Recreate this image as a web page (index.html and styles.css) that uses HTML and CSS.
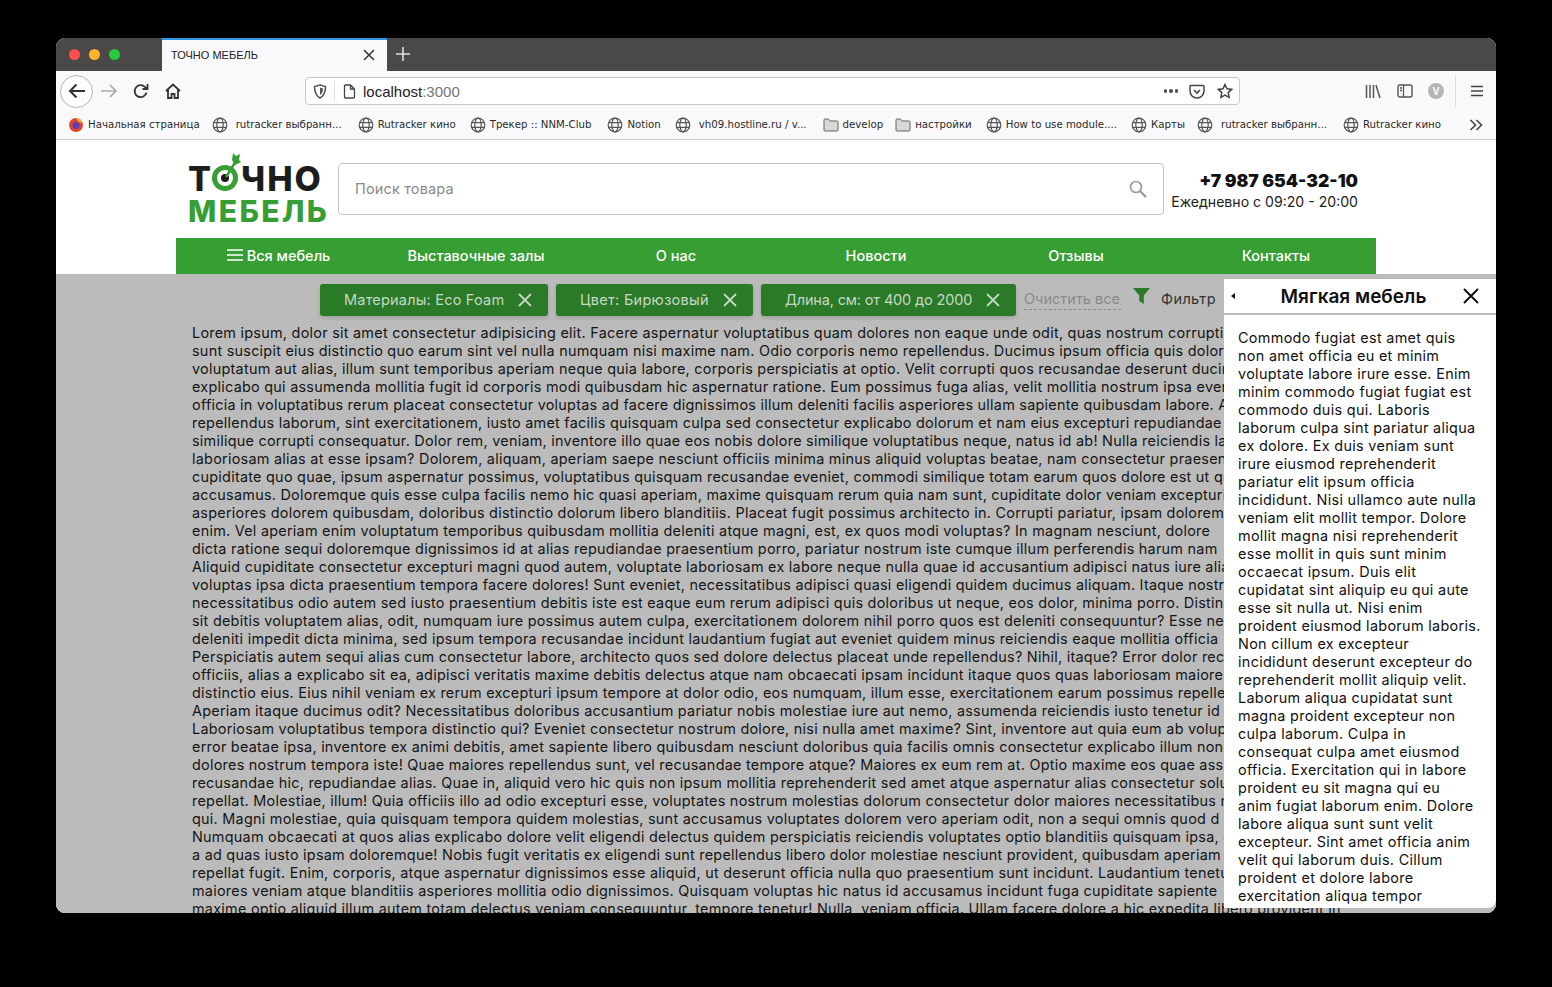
FILE: index.html
```html
<!DOCTYPE html>
<html lang="ru">
<head>
    <meta charset="UTF-8">
    <title>ТОЧНО МЕБЕЛЬ</title>
    <link rel="stylesheet" href="styles.css">
</head>
<body>
<div class="window">
    <!-- Вкладки -->
    <div class="tabbar">
        <div class="lights"><i class="red"></i><i class="yellow"></i><i class="green"></i></div>
        <div class="tab">
            <span class="tab-title">ТОЧНО МЕБЕЛЬ</span>
            <svg class="tab-close" width="12" height="12" viewBox="0 0 12 12"><path d="M1 1l10 10M11 1L1 11" stroke="#333" stroke-width="1.5"/></svg>
        </div>
        <svg class="tab-new" width="16" height="16" viewBox="0 0 16 16"><path d="M8 1v14M1 8h14" stroke="#ddd" stroke-width="1.6"/></svg>
    </div>

    <!-- Панель браузера -->
    <div class="toolbar">
        <div class="back"><svg width="20" height="18" viewBox="0 0 20 18"><path d="M18 9H3M9.500 2.500L3 9l6.500 6.500" fill="none" stroke="#333" stroke-width="2"/></svg></div>
        <svg class="tool-forward" width="18" height="16" viewBox="0 0 18 16"><path d="M1 8h15M10 2l6 6-6 6" fill="none" stroke="#aaa" stroke-width="1.700"/></svg>
        <svg class="tool-reload" width="16" height="16" viewBox="0 0 16 16"><path d="M13.500 9.500A6 6 0 1 1 12 4l2 2M14.500 1v5h-5" fill="none" stroke="#333" stroke-width="1.800"/></svg>
        <svg class="tool-home" width="16" height="16" viewBox="0 0 16 16"><path d="M1 8l7-6.500L15 8M3 6.500V15h3.500v-4h3v4H13V6.500" fill="none" stroke="#333" stroke-width="1.800"/></svg>
        <div class="urlbar">
            <svg class="url-shield" width="14" height="15" viewBox="0 0 14 15"><path d="M7 1l5.500 1.500c0 5-1 9-5.500 11.500C2.500 11.500 1.500 7.500 1.500 2.500z" fill="none" stroke="#555" stroke-width="1.500"/><path d="M7 3.500l3 1c0 3-.7 5-3 6.500z" fill="#555"/></svg>
            <span class="url-sep"></span>
            <svg class="url-page" width="13" height="15" viewBox="0 0 13 15"><path d="M2.500 1h5l4 4v8a1 1 0 0 1-1 1h-8a1 1 0 0 1-1-1V2a1 1 0 0 1 1-1zM7.500 1v4h4" fill="none" stroke="#444" stroke-width="1.300"/></svg>
            <span class="url-text">localhost<span class="url-port">:3000</span></span>
            <span class="url-dots"><i></i><i></i><i></i></span>
            <svg class="url-pocket" width="16" height="15" viewBox="0 0 16 15"><path d="M2 1.500h12a1 1 0 0 1 1 1V7a7 7 0 0 1-14 0V2.500a1 1 0 0 1 1-1z" fill="none" stroke="#444" stroke-width="1.500"/><path d="M5 6l3 3 3-3" fill="none" stroke="#444" stroke-width="1.600"/></svg>
            <svg class="url-star" width="16" height="16" viewBox="0 0 16 16"><path d="M8 1.500l2 4.300 4.700.6-3.500 3.200.9 4.700L8 12l-4.100 2.300.9-4.700L1.300 6.400 6 5.800z" fill="none" stroke="#444" stroke-width="1.500"/></svg>
        </div>
        <svg class="tool-lib" width="16" height="15" viewBox="0 0 16 15"><path d="M1.500 1v13M5 1v13M8.500 1v13M11 1l4 13" fill="none" stroke="#555" stroke-width="1.500"/></svg>
        <svg class="tool-side" width="16" height="14" viewBox="0 0 16 14"><rect x="1" y="1" width="14" height="12" rx="2" fill="none" stroke="#555" stroke-width="1.400"/><path d="M6.500 1v12M3 4h2M3 6.500h2" stroke="#555" stroke-width="1.300"/></svg>
        <span class="tool-avatar">V</span>
        <span class="tool-sep"></span>
        <svg class="tool-menu" width="12" height="12" viewBox="0 0 12 12"><path d="M0 1.500h12M0 6h12M0 10.500h12" stroke="#444" stroke-width="1.500"/></svg>
    </div>

    <!-- Закладки -->
    <div class="bookmarks">
        <span class="bm bm-first">
            <svg width="16" height="16" viewBox="0 0 16 16"><circle cx="8" cy="8" r="7" fill="#e0452b"/><circle cx="8" cy="8.500" r="3.500" fill="#5b3fb8"/><path d="M8 1a7 7 0 0 1 6.500 5L10 4.500z" fill="#fbb03b"/></svg>
            Начальная страница
        </span>
        <span class="bm bm-gap bm-wide"><svg class="globe" viewBox="0 0 16 16"><use href="#globe"/></svg>rutracker выбранн...</span>
        <span class="bm bm-mid"><svg class="globe" viewBox="0 0 16 16"><use href="#globe"/></svg>Rutracker кино</span>
        <span class="bm bm-wide"><svg class="globe" viewBox="0 0 16 16"><use href="#globe"/></svg>Трекер :: NNM-Club</span>
        <span class="bm bm-mid"><svg class="globe" viewBox="0 0 16 16"><use href="#globe"/></svg>Notion</span>
        <span class="bm bm-gap bm-wide"><svg class="globe" viewBox="0 0 16 16"><use href="#globe"/></svg>vh09.hostline.ru / v...</span>
        <span class="bm"><svg class="folder" viewBox="0 0 16 14"><use href="#folder"/></svg>develop</span>
        <span class="bm bm-mid"><svg class="folder" viewBox="0 0 16 14"><use href="#folder"/></svg>настройки</span>
        <span class="bm bm-mid"><svg class="globe" viewBox="0 0 16 16"><use href="#globe"/></svg>How to use module....</span>
        <span class="bm"><svg class="globe" viewBox="0 0 16 16"><use href="#globe"/></svg>Карты</span>
        <span class="bm bm-gap bm-wide"><svg class="globe" viewBox="0 0 16 16"><use href="#globe"/></svg>rutracker выбранн...</span>
        <span class="bm"><svg class="globe" viewBox="0 0 16 16"><use href="#globe"/></svg>Rutracker кино</span>
        <svg class="bm-more" width="14" height="12" viewBox="0 0 14 12"><path d="M1.500 1l5 5-5 5M7.500 1l5 5-5 5" fill="none" stroke="#444" stroke-width="1.600"/></svg>
    </div>

    <!-- Страница -->
    <div class="page">
        <header class="site-header">
            <div class="logo">
                <div class="logo-top">Т<svg class="logo-o" width="30" height="46" viewBox="0 0 30 46"><circle cx="13" cy="29" r="10.500" fill="none" stroke="#379e33" stroke-width="5"/><circle cx="13" cy="29" r="4" fill="#1d1d1b"/><path d="M14 28L24 12" stroke="#379e33" stroke-width="2.500"/><path d="M20 11l1-7 3 3 4-2-1 6 2 2-6 3z" fill="#379e33"/></svg>ЧНО</div>
                <div class="logo-bottom">МЕБЕЛЬ</div>
            </div>
            <div class="search">
                <span class="search-text">Поиск товара</span>
                <svg width="18" height="18" viewBox="0 0 18 18"><circle cx="7" cy="7" r="5.500" fill="none" stroke="#999" stroke-width="1.700"/><path d="M11 11l6 6" stroke="#999" stroke-width="2.200"/></svg>
            </div>
            <div class="contacts">
                <div class="phone">+7 987 654-32-10</div>
                <div class="hours">Ежедневно с 09:20 - 20:00</div>
            </div>
        </header>
        <nav class="nav">
            <a class="nav-all"><svg width="16" height="12" viewBox="0 0 16 12"><path d="M0 1h16M0 6h16M0 11h16" stroke="#fff" stroke-width="1.500"/></svg>Вся мебель</a>
            <a>Выставочные залы</a>
            <a>О нас</a>
            <a>Новости</a>
            <a>Отзывы</a>
            <a>Контакты</a>
        </nav>

        <div class="content">
            <div class="filters">
                <span class="chip chip-1">Материалы: Eco Foam<svg viewBox="0 0 14 14"><use href="#cross"/></svg></span>
                <span class="chip chip-2">Цвет: Бирюзовый<svg viewBox="0 0 14 14"><use href="#cross"/></svg></span>
                <span class="chip chip-3">Длина, см: от 400 до 2000<svg viewBox="0 0 14 14"><use href="#cross"/></svg></span>
                <span class="clear">Очистить все</span>
                <svg class="funnel" width="17" height="16" viewBox="0 0 17 16"><path d="M0 0h17l-6.200 7.500V16l-4.600-3V7.500z" fill="#2a7a27"/></svg>
                <span class="filter-label">Фильтр</span>
            </div>
            <div class="lorem">
                <p>Lorem ipsum, dolor sit amet consectetur adipisicing elit. Facere aspernatur voluptatibus quam dolores non eaque unde odit, quas nostrum corrupti</p>
                <p>sunt suscipit eius distinctio quo earum sint vel nulla numquam nisi maxime nam. Odio corporis nemo repellendus. Ducimus ipsum officia quis dolor</p>
                <p>voluptatum aut alias, illum sunt temporibus aperiam neque quia labore, corporis perspiciatis at optio. Velit corrupti quos recusandae deserunt ducimus</p>
                <p>explicabo qui assumenda mollitia fugit id corporis modi quibusdam hic aspernatur ratione. Eum possimus fuga alias, velit mollitia nostrum ipsa eveniet</p>
                <p>officia in voluptatibus rerum placeat consectetur voluptas ad facere dignissimos illum deleniti facilis asperiores ullam sapiente quibusdam labore. A</p>
                <p>repellendus laborum, sint exercitationem, iusto amet facilis quisquam culpa sed consectetur explicabo dolorum et nam eius excepturi repudiandae</p>
                <p>similique corrupti consequatur. Dolor rem, veniam, inventore illo quae eos nobis dolore similique voluptatibus neque, natus id ab! Nulla reiciendis la</p>
                <p>laboriosam alias at esse ipsam? Dolorem, aliquam, aperiam saepe nesciunt officiis minima minus aliquid voluptas beatae, nam consectetur praesentium</p>
                <p>cupiditate quo quae, ipsum aspernatur possimus, voluptatibus quisquam recusandae eveniet, commodi similique totam earum quos dolore est ut qui</p>
                <p>accusamus. Doloremque quis esse culpa facilis nemo hic quasi aperiam, maxime quisquam rerum quia nam sunt, cupiditate dolor veniam excepturi</p>
                <p>asperiores dolorem quibusdam, doloribus distinctio dolorum libero blanditiis. Placeat fugit possimus architecto in. Corrupti pariatur, ipsam dolorem</p>
                <p>enim. Vel aperiam enim voluptatum temporibus quibusdam mollitia deleniti atque magni, est, ex quos modi voluptas? In magnam nesciunt, dolore</p>
                <p>dicta ratione sequi doloremque dignissimos id at alias repudiandae praesentium porro, pariatur nostrum iste cumque illum perferendis harum nam</p>
                <p>Aliquid cupiditate consectetur excepturi magni quod autem, voluptate laboriosam ex labore neque nulla quae id accusantium adipisci natus iure alias</p>
                <p>voluptas ipsa dicta praesentium tempora facere dolores! Sunt eveniet, necessitatibus adipisci quasi eligendi quidem ducimus aliquam. Itaque nostrum</p>
                <p>necessitatibus odio autem sed iusto praesentium debitis iste est eaque eum rerum adipisci quis doloribus ut neque, eos dolor, minima porro. Distinctio</p>
                <p>sit debitis voluptatem alias, odit, numquam iure possimus autem culpa, exercitationem dolorem nihil porro quos est deleniti consequuntur? Esse ne</p>
                <p>deleniti impedit dicta minima, sed ipsum tempora recusandae incidunt laudantium fugiat aut eveniet quidem minus reiciendis eaque mollitia officia</p>
                <p>Perspiciatis autem sequi alias cum consectetur labore, architecto quos sed dolore delectus placeat unde repellendus? Nihil, itaque? Error dolor recusandae</p>
                <p>officiis, alias a explicabo sit ea, adipisci veritatis maxime debitis delectus atque nam obcaecati ipsam incidunt itaque quos quas laboriosam maiores</p>
                <p>distinctio eius. Eius nihil veniam ex rerum excepturi ipsum tempore at dolor odio, eos numquam, illum esse, exercitationem earum possimus repellendus</p>
                <p>Aperiam itaque ducimus odit? Necessitatibus doloribus accusantium pariatur nobis molestiae iure aut nemo, assumenda reiciendis iusto tenetur id</p>
                <p>Laboriosam voluptatibus tempora distinctio qui? Eveniet consectetur nostrum dolore, nisi nulla amet maxime? Sint, inventore aut quia eum ab volup</p>
                <p>error beatae ipsa, inventore ex animi debitis, amet sapiente libero quibusdam nesciunt doloribus quia facilis omnis consectetur explicabo illum non</p>
                <p>dolores nostrum tempora iste! Quae maiores repellendus sunt, vel recusandae tempore atque? Maiores ex eum rem at. Optio maxime eos quae assumenda</p>
                <p>recusandae hic, repudiandae alias. Quae in, aliquid vero hic quis non ipsum mollitia reprehenderit sed amet atque aspernatur alias consectetur solut</p>
                <p>repellat. Molestiae, illum! Quia officiis illo ad odio excepturi esse, voluptates nostrum molestias dolorum consectetur dolor maiores necessitatibus m</p>
                <p>qui. Magni molestiae, quia quisquam tempora quidem molestias, sunt accusamus voluptates dolorem vero aperiam odit, non a sequi omnis quod d</p>
                <p>Numquam obcaecati at quos alias explicabo dolore velit eligendi delectus quidem perspiciatis reiciendis voluptates optio blanditiis quisquam ipsa, quos</p>
                <p>a ad quas iusto ipsam doloremque! Nobis fugit veritatis ex eligendi sunt repellendus libero dolor molestiae nesciunt provident, quibusdam aperiam</p>
                <p>repellat fugit. Enim, corporis, atque aspernatur dignissimos esse aliquid, ut deserunt officia nulla quo praesentium sunt incidunt. Laudantium tenetur</p>
                <p>maiores veniam atque blanditiis asperiores mollitia odio dignissimos. Quisquam voluptas hic natus id accusamus incidunt fuga cupiditate sapiente</p>
                <p>maxime optio aliquid illum autem totam delectus veniam consequuntur, tempore tenetur! Nulla, veniam officia. Ullam facere dolore a hic expedita libero provident in</p>
            </div>

            <!-- Боковая панель -->
            <aside class="panel">
                <div class="panel-head">
                    <span class="panel-arrow"></span>
                    <span class="panel-title">Мягкая мебель</span>
                    <svg width="16" height="16" viewBox="0 0 16 16"><path d="M1 1l14 14M15 1L1 15" stroke="#111" stroke-width="2"/></svg>
                </div>
                <div class="panel-body">
                    <p>Commodo fugiat est amet quis</p>
                    <p>non amet officia eu et minim</p>
                    <p>voluptate labore irure esse. Enim</p>
                    <p>minim commodo fugiat fugiat est</p>
                    <p>commodo duis qui. Laboris</p>
                    <p>laborum culpa sint pariatur aliqua</p>
                    <p>ex dolore. Ex duis veniam sunt</p>
                    <p>irure eiusmod reprehenderit</p>
                    <p>pariatur elit ipsum officia</p>
                    <p>incididunt. Nisi ullamco aute nulla</p>
                    <p>veniam elit mollit tempor. Dolore</p>
                    <p>mollit magna nisi reprehenderit</p>
                    <p>esse mollit in quis sunt minim</p>
                    <p>occaecat ipsum. Duis elit</p>
                    <p>cupidatat sint aliquip eu qui aute</p>
                    <p>esse sit nulla ut. Nisi enim</p>
                    <p>proident eiusmod laborum laboris.</p>
                    <p>Non cillum ex excepteur</p>
                    <p>incididunt deserunt excepteur do</p>
                    <p>reprehenderit mollit aliquip velit.</p>
                    <p>Laborum aliqua cupidatat sunt</p>
                    <p>magna proident excepteur non</p>
                    <p>culpa laborum. Culpa in</p>
                    <p>consequat culpa amet eiusmod</p>
                    <p>officia. Exercitation qui in labore</p>
                    <p>proident eu sit magna qui eu</p>
                    <p>anim fugiat laborum enim. Dolore</p>
                    <p>labore aliqua sunt sunt velit</p>
                    <p>excepteur. Sint amet officia anim</p>
                    <p>velit qui laborum duis. Cillum</p>
                    <p>proident et dolore labore</p>
                    <p>exercitation aliqua tempor</p>
                </div>
            </aside>
        </div>
    </div>
</div>

<svg class="defs" width="0" height="0">
    <symbol id="globe" viewBox="0 0 16 16"><g fill="none" stroke="#555" stroke-width="1.200"><circle cx="8" cy="8" r="6.800"/><ellipse cx="8" cy="8" rx="3.200" ry="6.800"/><path d="M1.500 5.700h13M1.500 10.300h13"/></g></symbol>
    <symbol id="folder" viewBox="0 0 16 14"><path d="M1 3V2a1 1 0 0 1 1-1h3.500l1.500 2h7a1 1 0 0 1 1 1v8a1 1 0 0 1-1 1H2a1 1 0 0 1-1-1z" fill="#d8d8d8" stroke="#666"/></symbol>
    <symbol id="cross" viewBox="0 0 14 14"><path d="M1 1l12 12M13 1L1 13" stroke="currentColor" stroke-width="1.800"/></symbol>
</svg>
</body>
</html>
```

FILE: styles.css
```css
/* Окно браузера */
body { margin: 0; background: #000; font-family: "Liberation Sans", Arial, sans-serif; height: 987px; overflow: hidden; }
.window { width: 1440px; height: 875px; margin: 38px 0 0 56px; border-radius: 9px; overflow: hidden; display: flex; flex-direction: column; background: #f9f9fb; }
.defs { position: absolute; }

.tabbar { height: 33px; background: #4a4947; display: flex; align-items: center; flex-shrink: 0; }
.lights { width: 106px; padding-left: 13px; display: flex; gap: 9px; box-sizing: border-box; }
.lights i { width: 11px; height: 11px; border-radius: 50%; }
.red { background: #fc4f4d; }
.yellow { background: #fdb32b; }
.green { background: #27c93f; }
.tab { width: 225px; height: 33px; box-sizing: border-box; background: #f9f9fb; border-top: 2px solid #2f95e6; display: flex; align-items: center; justify-content: space-between; padding: 0 12px 2px 9px; }
.tab-title { font-size: 11px; color: #222; }
.tab-new { margin: 0 0 2px 8px; }

.toolbar { height: 37px; box-sizing: border-box; padding-top: 3px; background: #f9f9fb; display: flex; align-items: center; flex-shrink: 0; position: relative; }
.back { width: 33px; height: 33px; box-sizing: border-box; border: 1px solid #b4b4b4; border-radius: 50%; margin-left: 4px; background: #fdfdfd; display: flex; align-items: center; justify-content: center; }
.tool-forward { margin-left: 7px; }
.tool-reload { margin-left: 15px; }
.tool-home { margin-left: 16px; }
.urlbar { width: 935px; height: 28px; box-sizing: border-box; background: #fff; border: 1px solid #c8c8cc; border-radius: 4px; display: flex; align-items: center; margin-left: 124px; padding: 0 6px 0 7px; }
.url-sep { width: 1px; height: 20px; background: #ddd; margin: 0 8px 0 7px; }
.url-text { font-size: 15px; color: #222; margin-left: 7px; flex: 1; }
.url-port { color: #777; }
.url-dots { display: flex; gap: 2px; margin-right: 11px; }
.url-dots i { width: 3.500px; height: 3.500px; background: #555; border-radius: 50%; }
.url-pocket { margin-right: 12px; }
.tool-lib { margin-left: 125px; }
.tool-side { margin-left: 16px; }
.tool-avatar { width: 16px; height: 16px; margin-left: 15px; border-radius: 50%; background: #b5b5b5; color: #fff; font-size: 10px; font-weight: bold; display: flex; align-items: center; justify-content: center; }
.tool-sep { width: 1px; height: 32px; background: #ddd; margin-left: 11px; }
.tool-menu { margin-left: 15px; }

.bookmarks { height: 32px; box-sizing: border-box; padding: 2px 0 0 12px; border-bottom: 1px solid #ccc; background: #f9f9fb; display: flex; align-items: center; flex-shrink: 0; position: relative; gap: 12px; }
.bm { display: flex; align-items: center; gap: 4px; font-family: "DejaVu Sans", sans-serif; font-size: 10.200px; color: #2a2a2a; white-space: nowrap; }
.bm-gap { gap: 8px; }
.bm-wide { margin-right: 4px; }
.bm-mid { margin-right: 2px; }
.globe { width: 16px; height: 16px; }
.folder { width: 16px; height: 14px; }
.bm-more { position: absolute; left: 1413px; top: 11px; }

/* Шапка сайта */
.page { flex: 1; min-height: 0; display: flex; flex-direction: column; background: #fff; }
.site-header { height: 98px; margin: 0 138px 0 132px; display: flex; align-items: center; flex-shrink: 0; }
.logo { width: 150px; padding-top: 11px; font-family: Inter, sans-serif; font-weight: 800; }
.logo-top { font-size: 34px; color: #1d1d1b; display: flex; height: 33px; line-height: 33px; letter-spacing: 2px; }
.logo-o { flex-shrink: 0; margin: -13px -1px 0 -1px; }
.logo-bottom { font-size: 30px; height: 33px; line-height: 33px; color: #379e33; letter-spacing: 2.400px; }
.search { width: 826px; height: 52px; box-sizing: border-box; border: 1px solid #c4c4c4; border-radius: 4px; display: flex; align-items: center; justify-content: space-between; padding: 0 16px; font-size: 14.500px; letter-spacing: .15px; color: #8a8a8a; font-family: Inter, sans-serif; }
.search-text { margin-bottom: 2px; }
.contacts { flex: 1; padding-top: 4px; text-align: right; font-family: Inter, sans-serif; }
.phone { font-size: 17.500px; font-weight: 900; color: #111; line-height: 22px; }
.hours { font-size: 14.100px; color: #222; line-height: 20px; }
.nav { width: 1200px; height: 36px; box-sizing: border-box; padding-bottom: 2px; margin-left: 120px; background: #379e33; display: grid; grid-template-columns: repeat(6, 1fr); flex-shrink: 0; }
.nav a { display: flex; align-items: center; justify-content: center; gap: 4px; color: #fff; font-size: 14.500px; font-weight: 500; font-family: Inter, sans-serif; }
.nav .nav-all { padding-left: 5px; }

/* Контент под затемнением */
.content { flex: 1; min-height: 0; background: #bbb; position: relative; overflow: hidden; }
.filters { height: 50px; box-sizing: border-box; padding: 10px 0 0 264px; display: flex; align-items: flex-start; font-family: Inter, sans-serif; font-size: 14.500px; }
.chip { height: 32px; box-sizing: border-box; padding: 0 16px 2px 24px; background: #2a7a27; color: #c6d8c5; border-radius: 3px; display: flex; align-items: center; justify-content: space-between; margin-right: 8px; box-shadow: 0 2px 4px rgba(0,0,0,.15); white-space: nowrap; }
.chip svg { width: 14px; height: 14px; color: #c6d8c5; margin-top: 2px; }
.chip-1 { width: 228px; letter-spacing: .2px; }
.chip-2 { width: 197px; letter-spacing: .3px; }
.chip-3 { width: 255px; letter-spacing: -.15px; }
.clear { color: #8a8a8a; border-bottom: 1px dashed #8a8a8a; height: 19px; margin-top: 6px; width: 97px; white-space: nowrap; }
.funnel { margin: 4px 0 0 12px; }
.filter-label { margin: 6px 0 0 11px; color: #333; letter-spacing: .4px; }
.lorem { padding-left: 136px; font-family: Inter, sans-serif; font-size: 14.400px; letter-spacing: .26px; line-height: 18px; color: #151515; }
.lorem p { margin: 0; white-space: nowrap; }

/* Боковая панель */
.panel { position: absolute; left: 1168px; top: 5px; width: 272px; height: 629px; background: #fff; border-radius: 0 0 8px 0; overflow: hidden; font-family: Inter, sans-serif; }
.panel-head { height: 36px; box-sizing: border-box; border-bottom: 2px solid #bbb; display: flex; align-items: center; justify-content: space-between; padding: 0 17px 0 7px; }
.panel-arrow { width: 0; height: 0; border: 3.500px solid transparent; border-right: 4px solid #111; border-left: 0; }
.panel-title { font-size: 19px; font-weight: 600; color: #111; margin-left: 9px; }
.panel-body { padding: 14px 14px 0; font-size: 14.400px; letter-spacing: .32px; line-height: 18px; color: #111; }
.panel-body p { margin: 0; white-space: nowrap; }
```
